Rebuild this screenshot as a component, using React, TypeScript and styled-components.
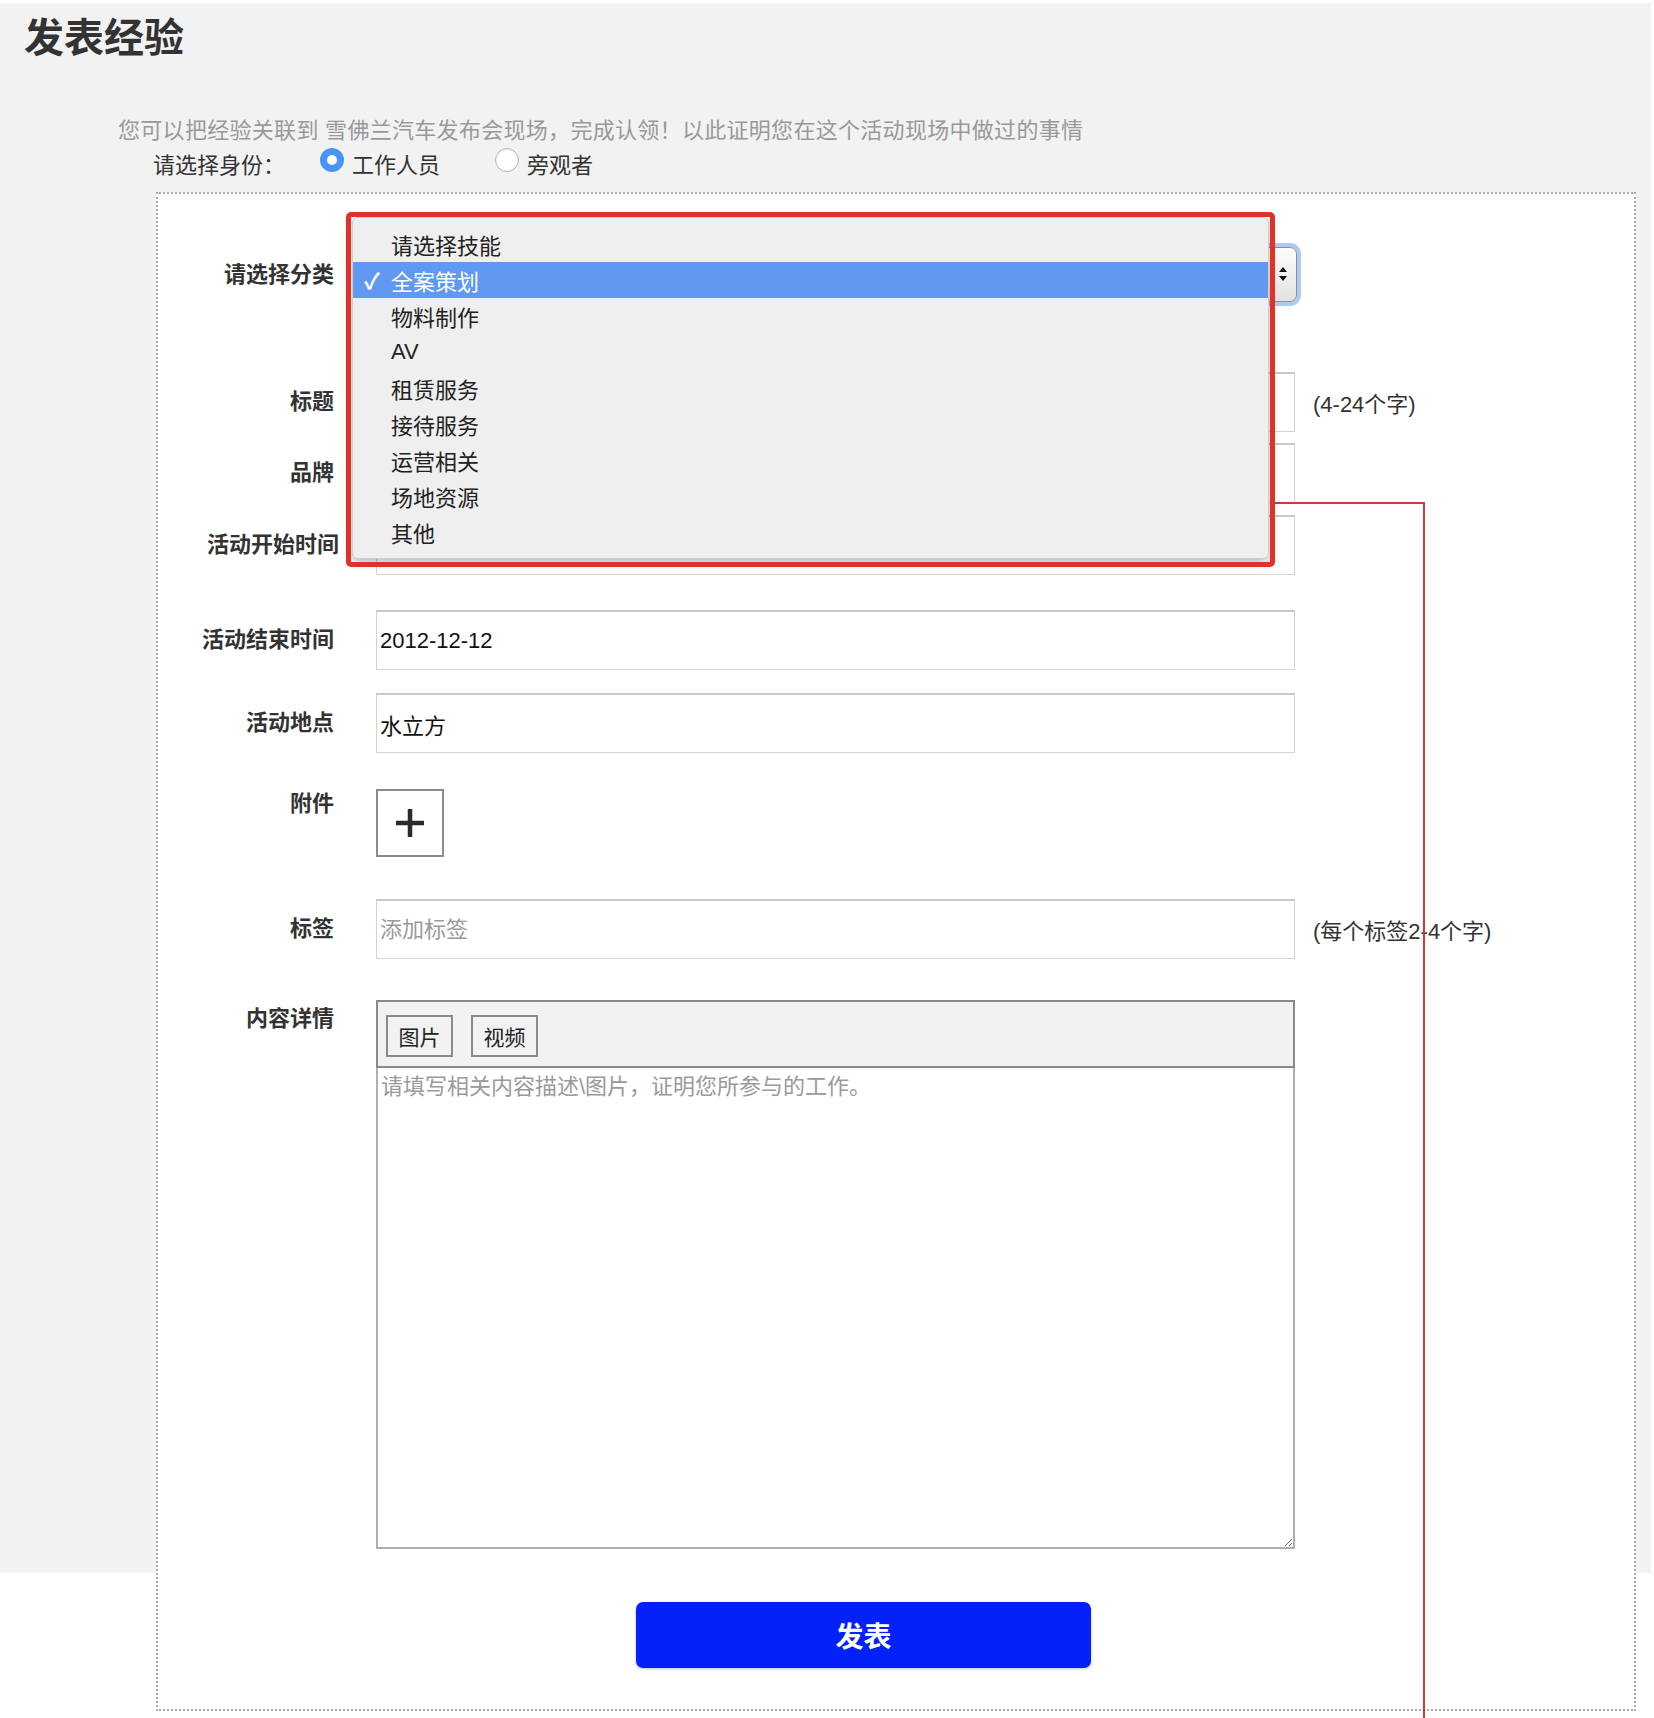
import React from 'react';
import styled, { createGlobalStyle } from 'styled-components';

const GlobalStyle = createGlobalStyle`
  html, body {
    margin: 0;
    padding: 0;
    background: #fff;
  }
  body {
    font-family: "Liberation Sans", "Noto Sans CJK SC", sans-serif;
    color: #333;
  }
`;

const SKILLS = [
  '请选择技能',
  '全案策划',
  '物料制作',
  'AV',
  '租赁服务',
  '接待服务',
  '运营相关',
  '场地资源',
  '其他',
];

const CJK = `"Liberation Sans", "Noto Sans CJK SC", sans-serif`;

function App() {
  return (
    <>
      <GlobalStyle />
      <Page>
        <PageTitle>发表经验</PageTitle>
        <Intro>您可以把经验关联到 雪佛兰汽车发布会现场，完成认领！以此证明您在这个活动现场中做过的事情</Intro>
        <IdentityRow>
          <IdentityLabel>请选择身份：</IdentityLabel>
          <RadioOption $gap={55}>
            <RadioDot $checked />
            工作人员
          </RadioOption>
          <RadioOption $gap={0}>
            <RadioDot />
            旁观者
          </RadioOption>
        </IdentityRow>

        <FormCard>
          <FormRow $mt={53}>
            <FieldLabel>请选择分类</FieldLabel>
            {/* the open menu covers the select's value */}
            <FakeSelect aria-label="全案策划">
              <SelectArrows viewBox="0 0 10 16">
                <path d="M5 1 L9 6 H1 Z" fill="#111" />
                <path d="M5 15 L9 10 H1 Z" fill="#111" />
              </SelectArrows>
            </FakeSelect>
          </FormRow>

          <FormRow $mt={70}>
            <FieldLabel>标题</FieldLabel>
            <TextInput />
            <Hint>(4-24个字)</Hint>
          </FormRow>

          <FormRow $mt={11}>
            <FieldLabel>品牌</FieldLabel>
            <TextInput />
          </FormRow>

          <FormRow $mt={12}>
            <FieldLabel $wide>活动开始时间</FieldLabel>
            <TextInput defaultValue="2012-12-12" />
          </FormRow>

          <FormRow $mt={35}>
            <FieldLabel>活动结束时间</FieldLabel>
            <TextInput defaultValue="2012-12-12" />
          </FormRow>

          <FormRow $mt={23}>
            <FieldLabel>活动地点</FieldLabel>
            <TextInput defaultValue="水立方" />
          </FormRow>

          <FormRow $mt={36} $top>
            <FieldLabel $offset={0}>附件</FieldLabel>
            <AddBox>
              <svg width="30" height="30" viewBox="0 0 30 30">
                <path d="M15 1 V29 M1 15 H29" stroke="#2b2b2b" strokeWidth="4.5" />
              </svg>
            </AddBox>
          </FormRow>

          <FormRow $mt={42}>
            <FieldLabel>标签</FieldLabel>
            <TextInput placeholder="添加标签" />
            <Hint>(每个标签2-4个字)</Hint>
          </FormRow>

          <FormRow $mt={41} $top>
            <FieldLabel $offset={4}>内容详情</FieldLabel>
            <Editor>
              <EditorToolbar>
                <ToolButton>图片</ToolButton>
                <ToolButton>视频</ToolButton>
              </EditorToolbar>
              <EditorArea placeholder="请填写相关内容描述\图片，证明您所参与的工作。" />
            </Editor>
          </FormRow>

          <SubmitButton type="button">发表</SubmitButton>

          <Dropdown>
            {SKILLS.map((s, i) => (
              <DropItem key={s} $active={i === 1}>
                {i === 1 && <Check>✓</Check>}
                {s}
              </DropItem>
            ))}
          </Dropdown>
          <RedFrame />
          <RedLineH />
          <RedLineV />
        </FormCard>
      </Page>
    </>
  );
}

// gray band stops at 1573px, the form card runs on below it
const Page = styled.div`
  min-height: 1718px;
  padding-top: 3px;
  box-sizing: border-box;
  display: flow-root;
  background: linear-gradient(#f2f2f2, #f2f2f2) no-repeat 0 3px / 1651px 1570px;
`;

const PageTitle = styled.h1`
  margin: 0;
  padding: 13px 0 0 24px;
  font-family: ${CJK};
  font-size: 40px;
  line-height: 44px;
  font-weight: 700;
  color: #333;
`;

const Intro = styled.p`
  margin: 56px 0 0 118px;
  font-family: ${CJK};
  font-size: 22px;
  letter-spacing: 0.3px;
  line-height: 30px;
  color: #999;
`;

const IdentityRow = styled.div`
  display: flex;
  align-items: center;
  margin: 2px 0 0 153px;
  height: 30px;
  font-family: ${CJK};
  font-size: 22px;
  color: #333;
`;

const IdentityLabel = styled.span`
  width: 167px;
`;

const RadioOption = styled.label<{ $gap: number }>`
  display: flex;
  align-items: center;
  font-size: 22px;
  margin-right: ${(p) => p.$gap}px;
`;

const RadioDot = styled.span<{ $checked?: boolean }>`
  box-sizing: border-box;
  width: 24px;
  height: 24px;
  border-radius: 50%;
  margin: -6px 8px 0 0;
  background: #fff;
  border: ${(p) => (p.$checked ? '7px solid #4a95f3' : '1px solid #b5b5b5')};
  box-shadow: ${(p) => (p.$checked ? 'none' : 'inset 0 1px 2px rgba(0,0,0,0.1)')};
`;

const FormCard = styled.div`
  position: relative;
  box-sizing: border-box;
  margin: 14px 0 0 156px;
  width: 1480px;
  height: 1519px;
  background: #fff;
  border: 2px dotted #aaa;
  display: flex;
  flex-direction: column;
`;

const FormRow = styled.div<{ $mt: number; $top?: boolean }>`
  display: flex;
  align-items: ${(p) => (p.$top ? 'flex-start' : 'center')};
  margin-top: ${(p) => p.$mt}px;
`;

const FieldLabel = styled.div<{ $offset?: number; $wide?: boolean }>`
  width: 176px;
  flex: none;
  margin-right: ${(p) => (p.$wide ? 37 : 42)}px;
  margin-left: ${(p) => (p.$wide ? 5 : 0)}px;
  text-align: right;
  white-space: nowrap;
  font-family: ${CJK};
  font-size: 22px;
  font-weight: 700;
  line-height: 30px;
  color: #333;
  padding-top: ${(p) => p.$offset ?? 0}px;
`;

const TextInput = styled.input`
  box-sizing: border-box;
  width: 919px;
  height: 60px;
  flex: none;
  padding: 0 3px;
  border: 1px solid #d3d3d3;
  border-top: 2px solid #c8c8c8;
  outline: none;
  font-family: ${CJK};
  font-size: 22px;
  color: #111;
  background: #fff;
  &::placeholder {
    color: #9a9a9a;
  }
`;

const Hint = styled.span`
  margin-left: 18px;
  font-family: ${CJK};
  font-size: 22px;
  color: #333;
  white-space: nowrap;
`;

const FakeSelect = styled.div`
  box-sizing: border-box;
  position: relative;
  width: 921px;
  height: 55px;
  border: 1px solid #8e8e8e;
  border-radius: 7px;
  background: linear-gradient(#fdfdfd, #e2e2e2);
  box-shadow: 0 0 0 4px #a9cbf6;
`;

const SelectArrows = styled.svg`
  position: absolute;
  right: 8px;
  top: 18px;
  width: 10px;
  height: 16px;
`;

const AddBox = styled.div`
  box-sizing: border-box;
  width: 68px;
  height: 68px;
  border: 2px solid #8c8c8c;
  display: flex;
  align-items: center;
  justify-content: center;
  background: #fff;
`;

const Editor = styled.div`
  width: 919px;
  display: flex;
  flex-direction: column;
`;

const EditorToolbar = styled.div`
  box-sizing: border-box;
  height: 68px;
  display: flex;
  gap: 18px;
  padding: 13px 0 0 8px;
  background: #f2f2f2;
  border: 2px solid #8a8a8a;
`;

const ToolButton = styled.button`
  box-sizing: border-box;
  width: 67px;
  height: 42px;
  padding: 0;
  background: #f2f2f2;
  border: 2px solid #8a8a8a;
  font-family: ${CJK};
  font-size: 21px;
  color: #222;
`;

const EditorArea = styled.textarea`
  box-sizing: border-box;
  height: 481px;
  padding: 4px 3px;
  border: 2px solid #b0b0b0;
  border-top: none;
  outline: none;
  resize: both;
  font-family: ${CJK};
  font-size: 22px;
  line-height: 30px;
  &::placeholder {
    color: #9a9a9a;
  }
`;

const SubmitButton = styled.button`
  align-self: flex-start;
  margin: 53px 0 0 478px;
  width: 455px;
  height: 66px;
  border: none;
  border-radius: 7px;
  background: #0422f7;
  color: #fff;
  font-family: ${CJK};
  font-size: 28px;
  font-weight: 700;
  box-shadow: 0 1px 3px rgba(0, 0, 80, 0.25);
`;

const Dropdown = styled.ul`
  position: absolute;
  left: 194px;
  top: 23px;
  width: 917px;
  height: 342px;
  box-sizing: border-box;
  margin: 0;
  padding: 8px 0 0;
  list-style: none;
  background: #efefef;
  border: 1px solid #cfcfcf;
  border-radius: 6px;
  box-shadow: 0 3px 10px rgba(0, 0, 0, 0.3);
`;

const DropItem = styled.li<{ $active?: boolean }>`
  position: relative;
  height: 36px;
  padding-left: 38px;
  display: flex;
  align-items: center;
  font-family: ${CJK};
  font-size: 22px;
  color: ${(p) => (p.$active ? '#fff' : '#222')};
  background: ${(p) => (p.$active ? '#6198f1' : 'transparent')};
`;

const Check = styled.span`
  position: absolute;
  left: 11px;
  top: 1px;
  font-size: 22px;
  font-weight: 700;
`;

const RedFrame = styled.div`
  position: absolute;
  left: 188px;
  top: 18px;
  width: 929px;
  height: 355px;
  box-sizing: border-box;
  border: 5px solid #e1322a;
  border-radius: 5px;
  pointer-events: none;
`;

const RedLineH = styled.div`
  position: absolute;
  left: 1117px;
  top: 308px;
  width: 150px;
  height: 2px;
  background: #cf3b33;
`;

const RedLineV = styled.div`
  position: absolute;
  left: 1265px;
  top: 308px;
  width: 2px;
  height: 1230px;
  background: #cf3b33;
`;

export default App;
